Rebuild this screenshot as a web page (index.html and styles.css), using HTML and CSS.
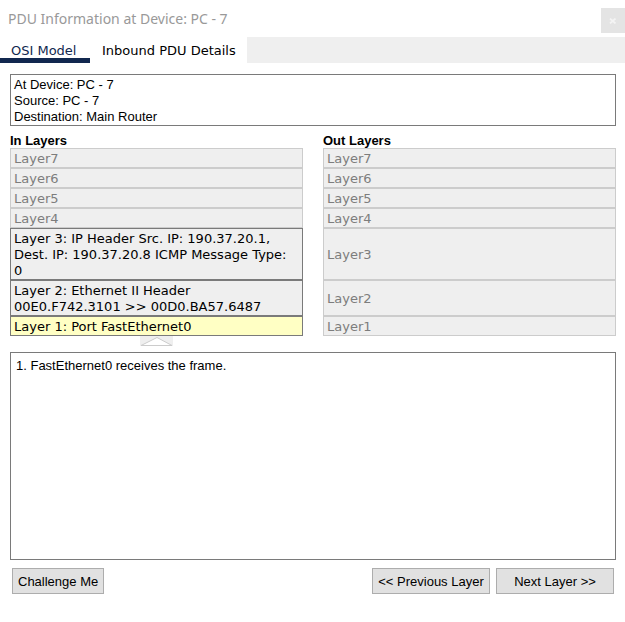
FILE: index.html
```html
<!DOCTYPE html>
<html lang="en">
<head>
<meta charset="utf-8">
<title>PDU Information</title>
<link rel="stylesheet" href="styles.css">
</head>
<body>
<header class="titlebar">
  <h1 class="title">PDU Information at Device: PC - 7</h1>
  <button class="close" type="button" aria-label="Close">
    <svg width="8" height="6" viewBox="0 0 8 6"><path d="M1 0.5 6.500 5.500M6.500 0.500 1 5.500" fill="none" stroke="#f4f4f4" stroke-width="1.700"/></svg>
  </button>
</header>
<nav class="tabs" role="tablist">
  <button class="tab active" type="button" role="tab" aria-selected="true">OSI Model</button>
  <button class="tab" type="button" role="tab" aria-selected="false">Inbound PDU Details</button>
</nav>
<main class="content">
  <section class="panel summary">
    <div>At Device: PC - 7</div>
    <div>Source: PC - 7</div>
    <div>Destination: Main Router</div>
  </section>
  <section class="layers">
    <h2 class="heading">In Layers</h2>
    <h2 class="heading">Out Layers</h2>
    <button class="layer" type="button" disabled>Layer7</button>
    <button class="layer" type="button" disabled>Layer7</button>
    <button class="layer" type="button" disabled>Layer6</button>
    <button class="layer" type="button" disabled>Layer6</button>
    <button class="layer" type="button" disabled>Layer5</button>
    <button class="layer" type="button" disabled>Layer5</button>
    <button class="layer" type="button" disabled>Layer4</button>
    <button class="layer" type="button" disabled>Layer4</button>
    <button class="layer used" type="button">Layer 3: IP Header Src. IP: 190.37.20.1, Dest. IP: 190.37.20.8 ICMP Message Type:<br>0</button>
    <button class="layer" type="button" disabled>Layer3</button>
    <button class="layer used" type="button">Layer 2: Ethernet II Header<br>00E0.F742.3101 &gt;&gt; 00D0.BA57.6487</button>
    <button class="layer" type="button" disabled>Layer2</button>
    <button class="layer used current" type="button">Layer 1: Port FastEthernet0</button>
    <button class="layer" type="button" disabled>Layer1</button>
    <div class="arrow">
      <svg width="33" height="10" viewBox="0 0 33 10"><path d="M0 0H33V10H0Z" fill="#efefef"/><path d="M1 9.500 17 1.500 32 9.500Z" fill="#fff" stroke="#ccc"/></svg>
    </div>
  </section>
  <section class="panel details">1. FastEthernet0 receives the frame.</section>
  <footer class="actions">
    <button class="action" type="button">Challenge Me</button>
    <span class="spacer"></span>
    <button class="action step" type="button">&lt;&lt; Previous Layer</button>
    <button class="action step" type="button">Next Layer &gt;&gt;</button>
  </footer>
</main>
</body>
</html>
```
FILE: styles.css
```css
* {
  box-sizing: border-box;
}

body {
  margin: 0;
  min-height: 100vh;
  display: flex;
  flex-direction: column;
  background: #fff;
  color: #000;
  font: 13px/16px "Liberation Sans", Arial, sans-serif;
}

button {
  margin: 0;
  border-radius: 0;
  color: inherit;
  font: inherit;
}

.titlebar {
  display: flex;
  align-items: center;
  justify-content: space-between;
  height: 37px;
  padding: 4px 0 0 8px;
}

.title {
  margin: 0;
  padding-bottom: 4px;
  color: #999;
  font: 14px/20px "Noto Sans", "Open Sans", sans-serif;
}

.close {
  display: flex;
  align-items: center;
  justify-content: center;
  width: 24px;
  height: 25px;
  padding: 0;
  border: 0;
  background: #e4e4e4;
}

.tabs {
  display: flex;
  height: 26px;
  background: #efefef;
}

.tab {
  padding: 2px 11px 0 12px;
  border: 0;
  background: #fff;
  font: 13px/24px "DejaVu Sans", Verdana, sans-serif;
  text-align: left;
}

.tab.active {
  min-width: 90px;
  padding: 6px 11px 0;
  border-bottom: 5px solid #11284f;
  color: #11284f;
  line-height: 15px;
}

.content {
  flex: 1;
  display: flex;
  flex-direction: column;
  padding: 11px 9px 28px 10px;
}

.panel {
  border: 1px solid #7a7a7a;
  background: #fff;
}

.summary {
  padding: 2px 3px 0;
}

.layers {
  display: grid;
  grid-template-columns: 1fr 1fr;
  column-gap: 20px;
  padding-top: 7px;
}

.heading {
  margin: 0;
  font-size: 13px;
  line-height: 15px;
}

.layer {
  min-height: 20px;
  padding: 2px 0 0 3px;
  border: 1px solid #ccc;
  background: #efefef;
  color: #7d7d7d;
  font: 13px/16px "DejaVu Sans", Verdana, sans-serif;
  text-align: left;
}

.layer.used {
  border-color: #7a7a7a;
  color: #000;
}

.layer.current {
  background: #ffffc4;
}

.arrow {
  display: flex;
  justify-content: center;
  height: 16px;
}

.details {
  flex: 1;
  padding: 5px;
}

.actions {
  display: flex;
  gap: 6px;
  padding: 8px 2px 0;
}

.spacer {
  flex: 1;
}

.action {
  height: 26px;
  padding: 1px 5px 0;
  border: 1px solid #adadad;
  background: #e1e1e1;
}

.step {
  width: 118px;
}
```
